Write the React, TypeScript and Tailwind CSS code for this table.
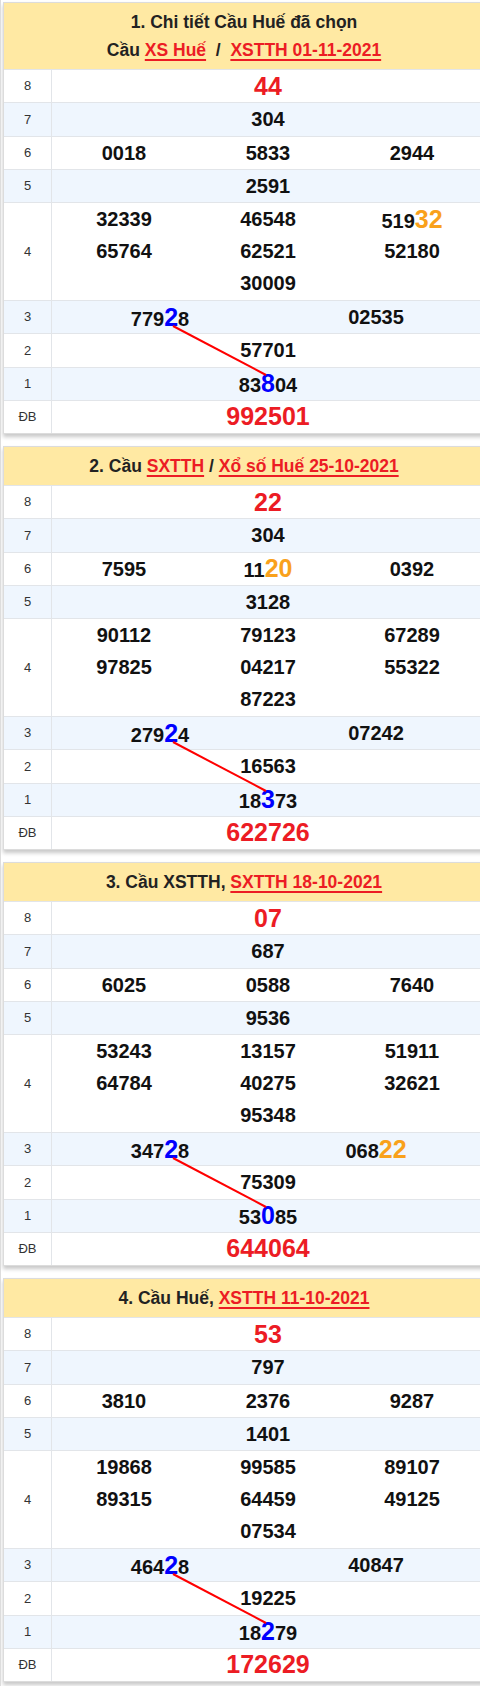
import React from 'react';

type Card = {
  title: React.ReactNode;
  g8: string;
  g7: string;
  g6: string[];
  g5: string;
  g4: string[];
  g3: string[];
  g2: string;
  g1: string;
  db: string;
};

const Link = ({ children }: { children: React.ReactNode }) => (
  <span className="text-[#ec1c24] underline decoration-2 underline-offset-[3px]">{children}</span>
);

const cards: Card[] = [
  {
    title: (
      <>
        <div>1. Chi tiết Cầu Huế đã chọn</div>
        <div>
          Cầu <Link>XS Huế</Link>{'\u00a0 / \u00a0'}<Link>XSTTH 01-11-2021</Link>
        </div>
      </>
    ),
    g8: '44',
    g7: '304',
    g6: ['0018', '5833', '2944'],
    g5: '2591',
    g4: ['32339', '46548', '519[32]', '65764', '62521', '52180', '30009'],
    g3: ['779<2>8', '02535'],
    g2: '57701',
    g1: '83<8>04',
    db: '992501',
  },
  {
    title: (
      <div>
        2. Cầu <Link>SXTTH</Link> / <Link>Xổ số Huế 25-10-2021</Link>
      </div>
    ),
    g8: '22',
    g7: '304',
    g6: ['7595', '11[20]', '0392'],
    g5: '3128',
    g4: ['90112', '79123', '67289', '97825', '04217', '55322', '87223'],
    g3: ['279<2>4', '07242'],
    g2: '16563',
    g1: '18<3>73',
    db: '622726',
  },
  {
    title: (
      <div>
        3. Cầu XSTTH, <Link>SXTTH 18-10-2021</Link>
      </div>
    ),
    g8: '07',
    g7: '687',
    g6: ['6025', '0588', '7640'],
    g5: '9536',
    g4: ['53243', '13157', '51911', '64784', '40275', '32621', '95348'],
    g3: ['347<2>8', '068[22]'],
    g2: '75309',
    g1: '53<0>85',
    db: '644064',
  },
  {
    title: (
      <div>
        4. Cầu Huế, <Link>XSTTH 11-10-2021</Link>
      </div>
    ),
    g8: '53',
    g7: '797',
    g6: ['3810', '2376', '9287'],
    g5: '1401',
    g4: ['19868', '99585', '89107', '89315', '64459', '49125', '07534'],
    g3: ['464<2>8', '40847'],
    g2: '19225',
    g1: '18<2>79',
    db: '172629',
  },
];

// [xx] = orange highlight, <x> = blue bridge digit
function Num({ v, big }: { v: string; big?: boolean }) {
  const parts = v.split(/(\[[^\]]+\]|<[^>]+>)/).filter(Boolean);
  return (
    <span className={big ? 'text-[25px] font-bold text-[#ec1c24]' : 'text-[20px] font-bold text-[#111]'}>
      {parts.map((p, i) => {
        if (p.startsWith('[')) return <span key={i} className="text-[25px] text-[#f9a11b]">{p.slice(1, -1)}</span>;
        if (p.startsWith('<')) return <span key={i} className="text-[25px] text-[#0000ff]">{p.slice(1, -1)}</span>;
        return <React.Fragment key={i}>{p}</React.Fragment>;
      })}
    </span>
  );
}

function Row({ label, alt, tall, children }: { label: string; alt?: boolean; tall?: boolean; children: React.ReactNode }) {
  return (
    <div className={`flex border-t border-[#e2e5e9] ${alt ? 'bg-[#eff6fe]' : 'bg-white'} ${tall ? 'h-[98px]' : 'h-[33.25px]'}`}>
      <div className="flex w-[48px] shrink-0 items-center justify-center border-r border-[#e2e5e9] text-[13px] text-[#333]">
        {label}
      </div>
      <div className="flex-1">{children}</div>
    </div>
  );
}

const Center = ({ v, big }: { v: string; big?: boolean }) => (
  <div className="flex h-full items-center justify-center leading-none">
    <Num v={v} big={big} />
  </div>
);

function ResultCard({ card }: { card: Card }) {
  return (
    <div className="w-[482px] shrink-0 border border-[#dcdcdc] bg-white shadow-[0_3px_4px_rgba(0,0,0,0.22)]">
      <div className="bg-[#ffe9a3] py-[5px] text-center text-[17.5px] font-bold leading-[28px] text-[#222]">
        {card.title}
      </div>
      <div className="relative">
        <Row label="8">
          <Center v={card.g8} big />
        </Row>
        <Row label="7" alt>
          <Center v={card.g7} />
        </Row>
        <Row label="6">
          <div className="grid h-full grid-cols-3">
            {card.g6.map((n) => (
              <Center key={n} v={n} />
            ))}
          </div>
        </Row>
        <Row label="5" alt>
          <Center v={card.g5} />
        </Row>
        <Row label="4" tall>
          <div className="grid h-full grid-cols-3 grid-rows-3 pb-[1px]">
            {card.g4.map((n, i) => (
              <div key={n} className={i === 6 ? 'col-start-2' : ''}>
                <Center v={n} />
              </div>
            ))}
          </div>
        </Row>
        <Row label="3" alt>
          <div className="grid h-full grid-cols-2">
            {card.g3.map((n) => (
              <Center key={n} v={n} />
            ))}
          </div>
        </Row>
        <Row label="2">
          <Center v={card.g2} />
        </Row>
        <Row label="1" alt>
          <Center v={card.g1} />
        </Row>
        <Row label="ĐB">
          <Center v={card.db} big />
        </Row>
        <svg className="pointer-events-none absolute left-0 top-0" width="480" height="364">
          <line x1="169" y1="257" x2="262" y2="306" stroke="#ff0000" strokeWidth="2" />
        </svg>
      </div>
    </div>
  );
}

export default function App() {
  return (
    <div className="flex w-[480px] flex-col gap-[12px] overflow-hidden border-l border-[#dddddd] bg-white pb-[4px] pl-[2px] pt-[2px] font-['Liberation_Sans',Arial,sans-serif]">
      {cards.map((c, i) => (
        <ResultCard key={i} card={c} />
      ))}
    </div>
  );
}
